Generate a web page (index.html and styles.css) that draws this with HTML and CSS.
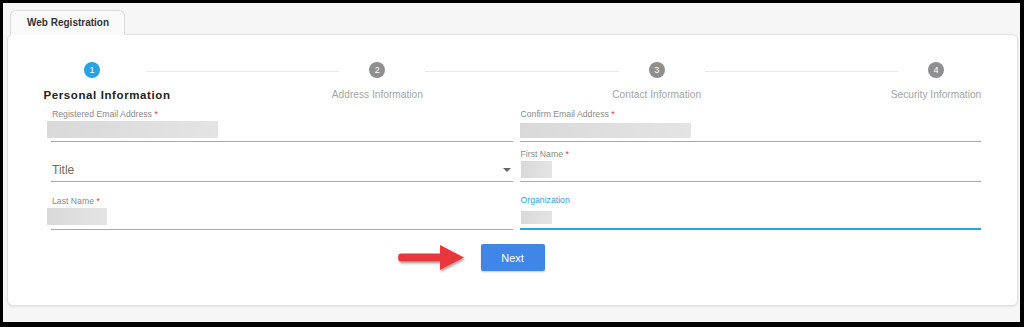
FILE: index.html
```html
<!DOCTYPE html>
<html lang="en">
<head>
  <meta charset="UTF-8" />
  <title>Web Registration</title>
  <link rel="stylesheet" href="styles.css">
</head>
<body>
  <div class="frame">
    <div class="tabs">
      <div class="tab">Web Registration</div>
    </div>

    <main class="panel">
      <div class="stepper">
        <div class="step is-active">
          <span class="step-num">1</span>
          <span class="step-label">Personal Information</span>
        </div>
        <div class="step-line line-first"></div>
        <div class="step">
          <span class="step-num">2</span>
          <span class="step-label">Address Information</span>
        </div>
        <div class="step-line"></div>
        <div class="step">
          <span class="step-num">3</span>
          <span class="step-label">Contact Information</span>
        </div>
        <div class="step-line"></div>
        <div class="step">
          <span class="step-num">4</span>
          <span class="step-label">Security Information</span>
        </div>
      </div>

      <div class="form">
        <div class="field row-1">
          <label class="field-label">Registered Email Address <span class="req">*</span></label>
          <div class="field-value value-wide value-shift"></div>
        </div>
        <div class="field row-1">
          <label class="field-label">Confirm Email Address <span class="req">*</span></label>
          <div class="field-value value-wide value-short"></div>
        </div>

        <div class="field row-2 select">
          <span class="select-text">Title</span>
          <span class="select-arrow"></span>
        </div>
        <div class="field row-2">
          <label class="field-label">First Name <span class="req">*</span></label>
          <div class="field-value value-tiny value-tall"></div>
        </div>

        <div class="field row-3 pad-4">
          <label class="field-label">Last Name <span class="req">*</span></label>
          <div class="field-value value-small value-shift"></div>
        </div>
        <div class="field row-3 is-focused">
          <label class="field-label">Organization</label>
          <div class="field-value value-tiny value-low"></div>
        </div>
      </div>

      <div class="actions">
        <div class="next-wrap">
          <svg class="arrow" width="72" height="32" viewBox="0 0 72 32">
            <defs>
              <filter id="sh" x="-20%" y="-20%" width="140%" height="160%">
                <feDropShadow dx="1" dy="2" stdDeviation="1.2" flood-color="#000" flood-opacity="0.35"/>
              </filter>
            </defs>
            <path d="M4 11.5 L43 11.5 L43 3 L67 15.5 L43 28 L43 19.5 L4 19.5 Q1 19.5 1 15.5 Q1 11.5 4 11.5 Z" fill="#e8383b" filter="url(#sh)"/>
          </svg>
          <button class="next-btn">Next</button>
        </div>
      </div>
    </main>
  </div>
</body>
</html>
```

FILE: styles.css
```css
body {
  margin: 0;
  background-color: #000;
  font-family: 'Liberation Sans', Arial, sans-serif;
}

.frame {
  margin: 3px 4px 5px 3px;
  height: 319px;
  box-sizing: border-box;
  padding: 7px 2px 0 4px;
  background-color: #f6f6f6;
}

.tabs {
  display: flex;
  padding-left: 3px;
  height: 24px;
}

.tab {
  width: 115px;
  box-sizing: border-box;
  border: 1px solid #dcdcdc;
  border-bottom: none;
  border-radius: 6px 6px 0 0;
  background-color: #fafafa;
  padding: 6px 0 0 16px;
  font-size: 10px;
  font-weight: bold;
  color: #333;
  position: relative;
  z-index: 1;
  height: 25px;
}

.panel {
  background-color: #fff;
  border: 1px solid #e2e2e2;
  border-radius: 6px;
  box-shadow: 0 1px 2px rgba(0, 0, 0, 0.08);
  height: 272px;
  box-sizing: border-box;
}

/* stepper */

.stepper {
  display: flex;
  align-items: flex-start;
  padding: 27px 73px 0 76px;
  height: 69px;
  box-sizing: border-box;
}

.step {
  width: 16px;
  display: flex;
  flex-direction: column;
  align-items: center;
}

.step-num {
  width: 16px;
  height: 16px;
  border-radius: 50%;
  background-color: #8f8f8f;
  color: #fff;
  font-size: 9px;
  line-height: 16px;
  text-align: center;
}

.step-label {
  white-space: nowrap;
  margin-top: 10px;
  font-size: 10.2px;
  line-height: 14px;
  color: #a5a5a5;
}

.step.is-active .step-num {
  background-color: #25a3e3;
}

.step.is-active .step-label {
  color: #222;
  font-weight: bold;
  font-size: 11.5px;
  letter-spacing: 0.6px;
  margin-left: 30px;
}

.step-line {
  flex: 1;
  height: 1px;
  background-color: #e9e9e9;
  margin: 9px 30px 0 40px;
}

.line-first {
  margin-left: 46px;
}

/* form */

.form {
  display: grid;
  grid-template-columns: 1fr 1fr;
  column-gap: 7px;
  padding: 0 36px 0 43px;
}

.field {
  display: flex;
  flex-direction: column;
  justify-content: flex-end;
  align-items: flex-start;
  border-bottom: 1px solid #a8a8a8;
  padding-bottom: 3px;
  box-sizing: border-box;
}

.row-1 { height: 38px; }
.row-2 { height: 40px; }
.row-3 { height: 48px; }

.pad-4 { padding-bottom: 4px; }

.field-label {
  font-size: 8.7px;
  line-height: 12px;
  color: #8a8a8a;
  padding-left: 1px;
  margin-bottom: 1px;
}

.req {
  color: #e53935;
}

.field-value {
  height: 17px;
  background: linear-gradient(90deg, #d9d9d9, #e4e4e4);
  filter: blur(0.6px);
}

.value-wide { width: 171px; }
.value-small { width: 60px; }
.value-tiny { width: 31px; }
.value-shift { margin-left: -4px; }
.value-short { height: 15px; margin-top: 2px; }
.value-tall { height: 17px; margin-left: 1px; }
.value-low { height: 13px; margin-top: 4px; margin-left: 1px; }

.select {
  flex-direction: row;
  align-items: flex-end;
  justify-content: space-between;
  padding-bottom: 4px;
}

.select-text {
  font-size: 12px;
  line-height: 14px;
  color: #6f6a64;
  padding-left: 1px;
}

.select-arrow {
  width: 0;
  height: 0;
  border-left: 4px solid transparent;
  border-right: 4px solid transparent;
  border-top: 4px solid #666;
  margin: 0 2px 5px 0;
}

.is-focused {
  border-bottom: 2px solid #27a7df;
  padding-bottom: 4px;
}

.is-focused .field-label {
  color: #28a3da;
}

/* actions */

.actions {
  display: flex;
  justify-content: center;
  padding-top: 14px;
}

.next-wrap {
  position: relative;
}

.arrow {
  position: absolute;
  right: 76px;
  top: -2px;
}

.next-btn {
  width: 64px;
  height: 27px;
  border: none;
  border-radius: 2px;
  background-color: #3f86e6;
  color: #fff;
  font-family: 'Liberation Sans', Arial, sans-serif;
  font-size: 11px;
  box-shadow: 0 1px 2px rgba(0, 0, 0, 0.2);
  cursor: pointer;
}
```
